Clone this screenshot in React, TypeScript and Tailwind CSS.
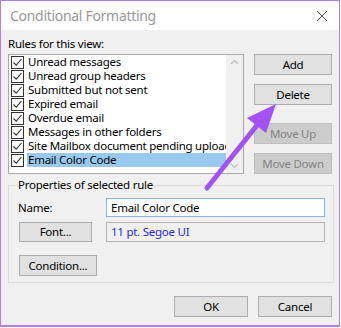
import React from "react";

const rules = [
  "Unread messages",
  "Unread group headers",
  "Submitted but not sent",
  "Expired email",
  "Overdue email",
  "Messages in other folders",
  "Site Mailbox document pending upload",
  "Email Color Code",
];

const Check: React.FC = () => (
  <span className="w-[13px] h-[13px] border border-[#333] bg-white flex items-center justify-center shrink-0">
    <svg width="11" height="11" viewBox="0 0 11 11">
      <path d="M1.5 5.5 L4.2 8.2 L9.5 2" fill="none" stroke="#333" strokeWidth="1.1" />
    </svg>
  </span>
);

const Btn: React.FC<{ label: string; disabled?: boolean; className?: string }> = ({
  label,
  disabled,
  className = "",
}) => (
  <div
    className={`h-[20px] flex items-center justify-center border ${
      disabled
        ? "bg-[#cccccc] border-[#bfbfbf] text-[#838383]"
        : "bg-[#e1e1e1] border-[#adadad] text-black"
    } ${className}`}
  >
    {label}
  </div>
);

const App: React.FC = () => {
  return (
    <div
      className="w-[341px] h-[328px] bg-white"
      style={{ fontFamily: '"Segoe UI", "Noto Sans", sans-serif' }}
    >
      {/* window */}
      <div className="relative w-[340px] h-[327px] border border-b-2 border-[#b57cf2] bg-[#f0f0f0] flex flex-col">
        {/* title bar */}
        <div className="h-[29px] bg-white flex items-center justify-between pl-[9px] pr-[11px] shrink-0">
          <span className="text-[14px] tracking-[-0.3px] text-[#999999]">Conditional Formatting</span>
          <svg width="12" height="12" viewBox="0 0 12 12">
            <path d="M1 1 L11 11 M11 1 L1 11" stroke="#555" strokeWidth="1" />
          </svg>
        </div>

        {/* body */}
        <div className="pl-[7px] pr-[7px] flex flex-col text-[11.5px] tracking-[-0.25px] text-black">
          <div className="pt-[6px] leading-[16px] h-[24px]">Rules for this view:</div>

          <div className="flex gap-[10px]">
            {/* list */}
            <div className="w-[236px] h-[120px] border border-[#a9a9a9] bg-white flex">
              <div className="flex-1 flex flex-col overflow-hidden">
                {rules.map((r, i) => (
                  <div key={r} className="h-[14px] flex items-center pl-[2px]">
                    <Check />
                    <span
                      className={`ml-[3px] pl-[1px] flex-1 h-[14px] leading-[14px] whitespace-nowrap overflow-hidden ${
                        i === 7 ? "bg-[#99c9ef]" : ""
                      }`}
                    >
                      {r}
                    </span>
                  </div>
                ))}
              </div>
              {/* scrollbar */}
              <div className="w-[17px] bg-[#f0f0f0] flex flex-col items-center justify-between py-[4px]">
                <svg width="9" height="6" viewBox="0 0 9 6">
                  <path d="M1 5 L4.5 1.5 L8 5" fill="none" stroke="#c2c2c2" strokeWidth="1.3" />
                </svg>
                <svg width="9" height="6" viewBox="0 0 9 6">
                  <path d="M1 1 L4.5 4.5 L8 1" fill="none" stroke="#c2c2c2" strokeWidth="1.3" />
                </svg>
              </div>
            </div>

            {/* buttons */}
            <div className="w-[78px] flex flex-col">
              <Btn label="Add" className="h-[21px]" />
              <Btn label="Delete" className="mt-[9px] h-[21px]" />
              <Btn label="Move Up" disabled className="mt-[18px] h-[21px]" />
              <Btn label="Move Down" disabled className="mt-[9px] h-[21px]" />
            </div>
          </div>

          {/* properties group */}
          <div className="mt-[11px] w-[326px] h-[98px] border border-[#dcdcdc] flex flex-col pl-[9px]">
            <div className="-mt-[9px] h-[16px] leading-[16px] w-fit bg-[#f0f0f0]">
              Properties of selected rule
            </div>
            <div className="mt-[5px] flex items-center h-[19px]">
              <span className="w-[88px]">Name:</span>
              <div className="w-[219px] h-[19px] border border-[#8fb5dd] bg-white flex items-center pl-[4px]">
                Email Color Code
              </div>
            </div>
            <div className="mt-[5px] flex items-center">
              <Btn label="Font..." className="w-[73px] h-[20px] ml-[1px]" />
              <div className="ml-[14px] w-[219px] h-[20px] border border-[#b4b4b4] bg-[#f0f0f0] flex items-center pl-[4px] text-[#2b2be0]">
                11 pt. Segoe UI
              </div>
            </div>
            <Btn label="Condition..." className="mt-[13px] w-[78px] h-[21px] ml-[1px]" />
          </div>

          {/* ok / cancel */}
          <div className="mt-[13px] flex justify-end gap-[10px]">
            <Btn label="OK" className="w-[74px] h-[21px]" />
            <Btn label="Cancel" className="w-[74px] h-[21px]" />
          </div>
        </div>

        {/* annotation arrow */}
        <svg
          className="absolute left-[-1px] top-[-1px] pointer-events-none"
          width="341"
          height="328"
          viewBox="0 0 341 328"
        >
          <line x1="207" y1="188" x2="262" y2="119" stroke="#a352f3" strokeWidth="5" strokeLinecap="round" />
          <polygon points="276,104 247,118 266,133" fill="#a352f3" />
        </svg>
      </div>
    </div>
  );
};

export default App;
